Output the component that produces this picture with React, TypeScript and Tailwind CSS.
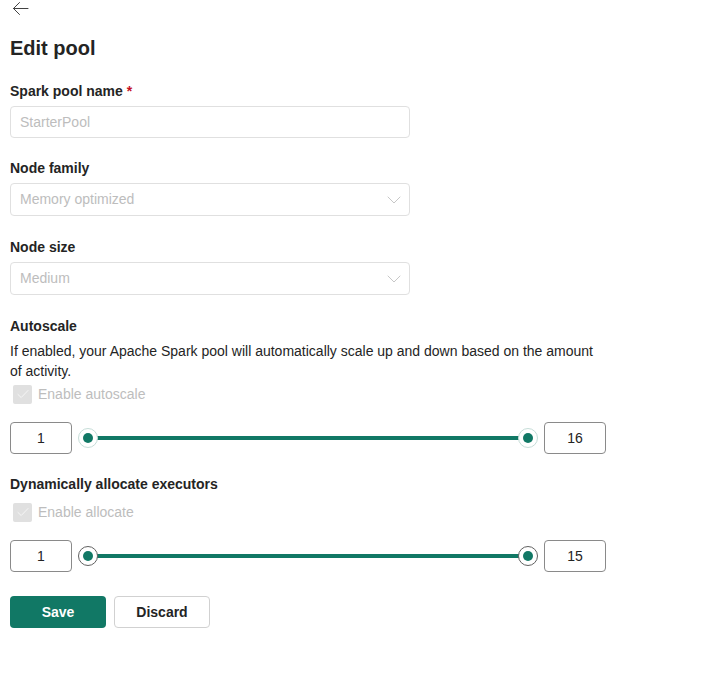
import React from 'react'

const TEAL = '#117865'

const BackArrow = () => (
  <svg width="17" height="15" viewBox="0 0 17 15" fill="none" className="ml-[12px] mt-[1px]">
    <path d="M16 7.5H1.5M1.5 7.5L7.5 1.5M1.5 7.5L7.5 13.5" stroke="#424242" strokeWidth="1" strokeLinecap="round" strokeLinejoin="round" />
  </svg>
)

const Chevron = () => (
  <svg width="14" height="8" viewBox="0 0 14 8" fill="none">
    <path d="M1 1L7 7L13 1" stroke="#c7c7c7" strokeWidth="1" strokeLinecap="round" strokeLinejoin="round" />
  </svg>
)

const Field = ({ label, required, children, className = '' }: { label: string; required?: boolean; children: React.ReactNode; className?: string }) => (
  <div className={`flex flex-col ${className}`}>
    <label className="text-[14px] leading-[20px] font-semibold text-[#242424]">
      {label}
      {required && <span className="text-[#c50f1f] ml-[4px]">*</span>}
    </label>
    <div className="mt-[5px]">{children}</div>
  </div>
)

const Dropdown = ({ value }: { value: string }) => (
  <div className="w-[400px] h-[33px] rounded-[4px] border border-[#e0e0e0] flex items-center justify-between pl-[9px] pr-[8px] text-[14px] text-[#bdbdbd]">
    <span>{value}</span>
    <Chevron />
  </div>
)

const DisabledCheck = ({ label }: { label: string }) => (
  <div className="flex items-center h-[20px] gap-[6px]">
    <div className="w-[19px] h-[19px] ml-[3px] rounded-[2px] bg-[#e0e0e0] flex items-center justify-center">
      <svg width="12" height="10" viewBox="0 0 12 10" fill="none">
        <path d="M1 5.5L4.2 8.5L11 1.5" stroke="#f5f5f5" strokeWidth="1" strokeLinecap="round" strokeLinejoin="round" />
      </svg>
    </div>
    <span className="text-[14px] text-[#bdbdbd]">{label}</span>
  </div>
)

const Thumb = ({ side, ring }: { side: 'left' | 'right'; ring: string }) => (
  <div
    className={`absolute top-1/2 -translate-y-1/2 w-[20px] h-[20px] rounded-full bg-white border-[1.5px] flex items-center justify-center ${ring} ${side === 'left' ? 'left-0' : 'right-0'}`}
  >
    <div className="w-[10px] h-[10px] rounded-full bg-[#117865]" />
  </div>
)

const RangeRow = ({ min, max, ring }: { min: string; max: string; ring: string }) => (
  <div className="flex items-center w-[596px] h-[32px]">
    <div className="w-[62px] h-[32px] rounded-[4px] border border-[#8a8a8a] flex items-center justify-center text-[14px] text-[#242424]">
      {min}
    </div>
    <div className="relative flex-1 h-[20px] mx-[6px]">
      <div className="absolute left-[10px] right-[10px] top-1/2 -translate-y-1/2 h-[4px]" style={{ background: TEAL }} />
      <Thumb side="left" ring={ring} />
      <Thumb side="right" ring={ring} />
    </div>
    <div className="w-[62px] h-[32px] rounded-[4px] border border-[#8a8a8a] flex items-center justify-center text-[14px] text-[#242424]">
      {max}
    </div>
  </div>
)

export default function App() {
  return (
    <div className="w-[703px] h-[692px] bg-white overflow-hidden font-['Segoe_UI','Liberation_Sans',sans-serif]">
      <BackArrow />
      <div className="px-[10px] flex flex-col">
        <h1 className="mt-[18px] text-[20px] leading-[28px] font-semibold text-[#242424]">Edit pool</h1>

        <Field label="Spark pool name" required className="mt-[19px]">
          <div className="w-[400px] h-[32px] rounded-[4px] border border-[#e0e0e0] flex items-center px-[9px] text-[14px] text-[#bdbdbd]">
            StarterPool
          </div>
        </Field>

        <Field label="Node family" className="mt-[20px]">
          <Dropdown value="Memory optimized" />
        </Field>

        <Field label="Node size" className="mt-[21px]">
          <Dropdown value="Medium" />
        </Field>

        <div className="mt-[21px] text-[14px] leading-[20px] font-semibold text-[#242424]">Autoscale</div>
        <p className="mt-[5px] w-[596px] text-[14px] leading-[20px] text-[#242424]">
          If enabled, your Apache Spark pool will automatically scale up and down based on the amount of activity.
        </p>
        <div className="mt-[3px]">
          <DisabledCheck label="Enable autoscale" />
        </div>
        <div className="mt-[18px]">
          <RangeRow min="1" max="16" ring="border-[#c6ddd8]" />
        </div>

        <div className="mt-[20px] text-[14px] leading-[20px] font-semibold text-[#242424]">Dynamically allocate executors</div>
        <div className="mt-[8px]">
          <DisabledCheck label="Enable allocate" />
        </div>
        <div className="mt-[18px]">
          <RangeRow min="1" max="15" ring="border-[#616161]" />
        </div>

        <div className="mt-[24px] flex gap-[8px]">
          <button className="w-[96px] h-[32px] rounded-[4px] text-white text-[14px] font-semibold" style={{ background: TEAL }}>
            Save
          </button>
          <button className="w-[96px] h-[32px] rounded-[4px] border border-[#d1d1d1] bg-white text-[#242424] text-[14px] font-semibold">
            Discard
          </button>
        </div>
      </div>
    </div>
  )
}
